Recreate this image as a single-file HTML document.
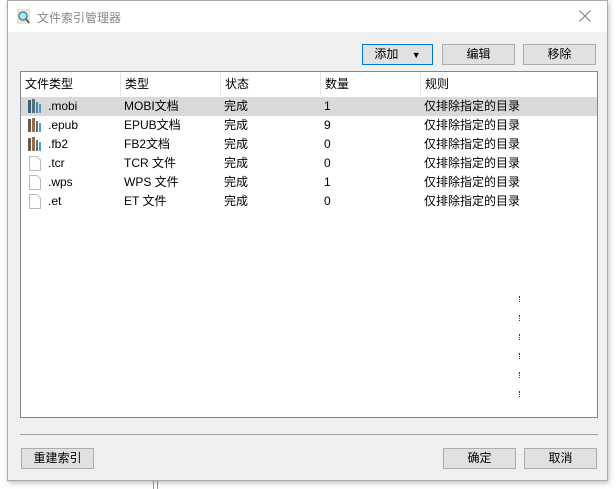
<!DOCTYPE html>
<html><head><meta charset="utf-8"><style>
*{margin:0;padding:0;box-sizing:border-box}
body{width:616px;height:489px;background:#fff;position:relative;overflow:hidden;font-family:"Liberation Sans","Noto Sans CJK SC",sans-serif;font-size:12px;color:#000}
.win{position:absolute;left:7px;top:0;width:601px;height:481px;background:#f0f0f0;border:1px solid #aaa;box-shadow:1px 2px 5px rgba(0,0,0,.25)}
.title{position:absolute;left:0;top:0;width:100%;height:31px;background:#fff}
.title .t{position:absolute;left:29px;top:8px;color:#888;font-size:12px}
.title .x{position:absolute;right:12px;top:3px;color:#888;font-size:20px;font-weight:100;font-family:"DejaVu Sans",sans-serif}
.btn{position:absolute;height:21px;background:#e1e1e1;border:1px solid #adadad;text-align:center;line-height:19px;font-size:12px}
.list{position:absolute;left:12px;top:70px;width:578px;height:347px;background:#fff;border:1px solid #828790}
.hd{position:absolute;top:0;height:24px;line-height:24px;padding-left:4px;border-right:1px solid #e5e5e5}
.row{position:absolute;left:0;width:100%;height:19px;line-height:19px}
.row span{position:absolute}
.sel{background:#d9d9d9}
.ic{position:absolute;left:7px;top:2px}
.dot{position:absolute;left:498px;width:2px;height:6px;border-left:1px dotted #333}
</style></head><body>
<div style="position:absolute;left:153px;top:478px;width:5px;height:11px;border-left:1px solid #999;border-right:1px solid #999"></div>
<div class="win">
 <div class="title">
  <svg style="position:absolute;left:9px;top:8px" width="14" height="16" viewBox="0 0 14 16"><rect x="0" y="0" width="13" height="15" fill="#f4e2cc"/><circle cx="6" cy="7" r="4" fill="#bfe6ef" stroke="#2a9ab0" stroke-width="1.5"/><line x1="9" y1="10" x2="12" y2="14" stroke="#555" stroke-width="1.6"/></svg>
  <div class="t">文件索引管理器</div>
  <svg style="position:absolute;right:16px;top:9px" width="12" height="12"><path d="M0.5 0.5L11.5 11.5M11.5 0.5L0.5 11.5" stroke="#777" stroke-width="1"/></svg>
 </div>
 <div class="btn" style="left:354px;top:43px;width:71px;border:1px solid #0078d7">添加 &nbsp;&nbsp;&nbsp;<span style="font-size:9px">▼</span></div>
 <div class="btn" style="left:434px;top:43px;width:73px">编辑</div>
 <div class="btn" style="left:515px;top:43px;width:73px">移除</div>
 <div class="list">
  <div class="hd" style="left:0;width:100px">文件类型</div>
  <div class="hd" style="left:100px;width:100px">类型</div>
  <div class="hd" style="left:200px;width:100px">状态</div>
  <div class="hd" style="left:300px;width:100px">数量</div>
  <div class="hd" style="left:400px;width:178px;border:none">规则</div>
  <div class="row sel" style="top:25px"><svg class="ic" width="14" height="14"><rect x="0" y="1" width="3" height="13" fill="#3e5f72"/><rect x="4" y="0" width="3" height="14" fill="#4e7084"/><rect x="8" y="3" width="2" height="11" fill="#5a7f95"/><rect x="11" y="5" width="2" height="9" fill="#3aa0d8"/></svg><span style="left:27px">.mobi</span><span style="left:103px">MOBI文档</span><span style="left:203px">完成</span><span style="left:303px">1</span><span style="left:403px">仅排除指定的目录</span></div>
  <div class="row" style="top:44px"><svg class="ic" width="14" height="14"><rect x="0" y="1" width="3" height="13" fill="#6b5a45"/><rect x="4" y="0" width="3" height="14" fill="#8a7257"/><rect x="8" y="3" width="2" height="11" fill="#7a6a55"/><rect x="11" y="5" width="2" height="9" fill="#3aa0d8"/></svg><span style="left:27px">.epub</span><span style="left:103px">EPUB文档</span><span style="left:203px">完成</span><span style="left:303px">9</span><span style="left:403px">仅排除指定的目录</span></div>
  <div class="row" style="top:63px"><svg class="ic" width="14" height="14"><rect x="0" y="1" width="3" height="13" fill="#6b5a45"/><rect x="4" y="0" width="3" height="14" fill="#8a7257"/><rect x="8" y="3" width="2" height="11" fill="#7a6a55"/><rect x="11" y="5" width="2" height="9" fill="#3aa0d8"/></svg><span style="left:27px">.fb2</span><span style="left:103px">FB2文档</span><span style="left:203px">完成</span><span style="left:303px">0</span><span style="left:403px">仅排除指定的目录</span></div>
  <div class="row" style="top:82px"><svg class="ic" width="14" height="15"><path d="M1.5 .5H9L12.5 4V14.5H1.5Z" fill="#fff" stroke="#bbb"/></svg><span style="left:27px">.tcr</span><span style="left:103px">TCR 文件</span><span style="left:203px">完成</span><span style="left:303px">0</span><span style="left:403px">仅排除指定的目录</span></div>
  <div class="row" style="top:101px"><svg class="ic" width="14" height="15"><path d="M1.5 .5H9L12.5 4V14.5H1.5Z" fill="#fff" stroke="#bbb"/></svg><span style="left:27px">.wps</span><span style="left:103px">WPS 文件</span><span style="left:203px">完成</span><span style="left:303px">1</span><span style="left:403px">仅排除指定的目录</span></div>
  <div class="row" style="top:120px"><svg class="ic" width="14" height="15"><path d="M1.5 .5H9L12.5 4V14.5H1.5Z" fill="#fff" stroke="#bbb"/></svg><span style="left:27px">.et</span><span style="left:103px">ET 文件</span><span style="left:203px">完成</span><span style="left:303px">0</span><span style="left:403px">仅排除指定的目录</span></div>
  <div class="dot" style="top:224px"></div><div class="dot" style="top:243px"></div><div class="dot" style="top:262px"></div><div class="dot" style="top:281px"></div><div class="dot" style="top:300px"></div><div class="dot" style="top:319px"></div>
 </div>
 <div style="position:absolute;left:12px;top:433px;width:578px;height:1px;background:#a0a0a0"></div>
 <div class="btn" style="left:13px;top:447px;width:73px">重建索引</div>
 <div class="btn" style="left:435px;top:447px;width:73px">确定</div>
 <div class="btn" style="left:516px;top:447px;width:73px">取消</div>
</div>
</body></html>
